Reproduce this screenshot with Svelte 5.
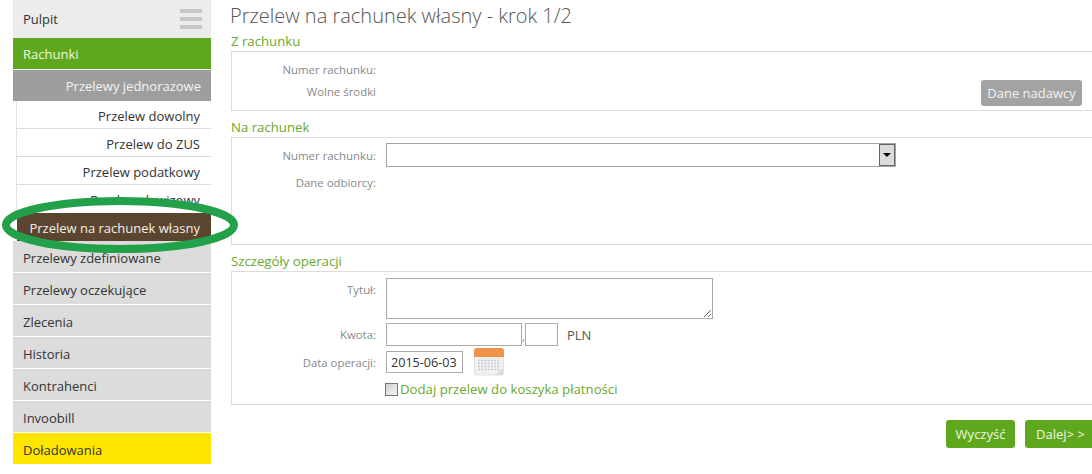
<script>
  const submenu = ['Przelew dowolny', 'Przelew do ZUS', 'Przelew podatkowy', 'Przelew dewizowy'];
  const after = ['Przelewy zdefiniowane', 'Przelewy oczekujące', 'Zlecenia', 'Historia', 'Kontrahenci', 'Invoobill'];
</script>

<div class="page">
  <nav class="side">
    <div class="pulpit">
      <span>Pulpit</span>
      <span class="burger"><i></i><i></i><i></i></span>
    </div>
    <div class="item active">Rachunki</div>
    <div class="item group">Przelewy jednorazowe</div>
    <ul class="sub">
      {#each submenu as s}
        <li>{s}</li>
      {/each}
    </ul>
    <div class="current">Przelew na rachunek własny</div>
    {#each after as a}
      <div class="item">{a}</div>
    {/each}
    <div class="item yellow">Doładowania</div>

    <!-- green marker round the current entry -->
    <svg class="marker" width="240" height="60" viewBox="0 0 240 60">
      <ellipse cx="120" cy="28" rx="114" ry="24" fill="none" stroke="#22a04a" stroke-width="8" />
    </svg>
  </nav>

  <main class="main">
    <h1>Przelew na rachunek własny - krok 1/2</h1>

    <h2>Z rachunku</h2>
    <section class="box from">
      <div class="fields">
        <div class="row r-from"><span class="lbl">Numer rachunku:</span></div>
        <div class="row r-from"><span class="lbl">Wolne środki</span></div>
      </div>
      <button class="btn gray">Dane nadawcy</button>
    </section>

    <h2>Na rachunek</h2>
    <section class="box to">
      <div class="row r-select">
        <span class="lbl">Numer rachunku:</span>
        <div class="select"><span class="arrow"></span></div>
      </div>
      <div class="row r-recv"><span class="lbl">Dane odbiorcy:</span></div>
    </section>

    <h2>Szczegóły operacji</h2>
    <section class="box details">
      <div class="row r-title">
        <span class="lbl">Tytuł:</span>
        <textarea></textarea>
      </div>
      <div class="row r-amount">
        <span class="lbl">Kwota:</span>
        <input class="whole" />
        <span class="comma">,</span>
        <input class="cents" />
        <span class="pln">PLN</span>
      </div>
      <div class="row r-date">
        <span class="lbl">Data operacji:</span>
        <input class="date" value="2015-06-03" />
        <svg class="cal" width="30" height="28" viewBox="0 0 30 28">
          <rect x="0.5" y="1" width="29" height="26" rx="2" fill="#f1f1f1" stroke="#e2e2e2" />
          <path d="M0 9V3a3 3 0 0 1 3-3h24a3 3 0 0 1 3 3v6z" fill="#f0924a" />
          <path d="M4 12.5h22M4 15.5h22M4 18.5h22M4 21.5h22" stroke="#c9ccd2" stroke-width="1.4" stroke-dasharray="2 1.2" />
          <path d="M21 27l8-7v5a2 2 0 0 1-2 2z" fill="#dcdcdc" />
        </svg>
      </div>
      <div class="row r-check">
        <span class="lbl"></span>
        <label class="check"><span class="cb"></span>Dodaj przelew do koszyka płatności</label>
      </div>
    </section>

    <div class="actions">
      <button class="btn green">Wyczyść</button>
      <button class="btn green">Dalej&gt; &gt;</button>
    </div>
  </main>
</div>

<style>
  :global(body) {
    background: #fff;
    font-family: "Open Sans", "Liberation Sans", sans-serif;
  }

  .page {
    display: flex;
    width: 1092px;
    height: 474px;
    overflow: hidden;
    font-size: 13px;
    color: #333;
  }

  /* Sidebar */
  .side {
    position: relative;
    flex: none;
    width: 198px;
    margin-left: 13px;
    margin-right: 20px;
  }

  .pulpit {
    display: flex;
    align-items: center;
    justify-content: space-between;
    height: 38px;
    padding: 0 9px 0 10px;
    background: #ececec;
    box-sizing: border-box;
  }

  .burger {
    display: flex;
    flex-direction: column;
    gap: 4px;
  }
  .burger i {
    display: block;
    width: 22px;
    height: 4px;
    background: #c6c6c6;
  }

  .item {
    height: 31px;
    line-height: 34px;
    padding-left: 10px;
    margin-bottom: 1px;
    background: #dcdcdc;
  }
  .active { background: #5fa81e; color: #eef6e0; line-height: 32px; }
  .group {
    background: #9e9e9e;
    color: #f4f4f4;
    line-height: 32px;
    text-align: right;
    padding: 0 10px 0 0;
    margin-bottom: 0;
  }
  .yellow { background: #ffe600; }

  .sub {
    list-style: none;
    margin: 0 0 0 3px;
    padding: 0;
    border-left: 1px solid #e2e2e2;
  }
  .sub li {
    height: 27px;
    line-height: 30px;
    text-align: right;
    padding-right: 11px;
    border-bottom: 1px solid #dcdcdc;
  }
  .sub li:last-child { height: 28px; border-bottom: none; }

  .current {
    height: 28px;
    line-height: 30px;
    margin-left: 4px;
    padding-right: 11px;
    text-align: right;
    background: #5b452f;
    color: #f3efe9;
  }

  .marker {
    position: absolute;
    left: -13px;
    top: 197px;
  }

  /* Main column */
  .main {
    flex: 1;
    min-width: 0;
    margin-right: -4px;
  }

  h1 {
    margin: 0 0 0 -1px;
    height: 31px;
    line-height: 31px;
    font-size: 20px;
    font-weight: 300;
    color: #555;
  }

  h2 {
    margin: 0;
    height: 20px;
    line-height: 20px;
    font-size: 13.2px;
    font-weight: 400;
    color: #6aa82e;
  }

  .box {
    box-sizing: border-box;
    border: 1px solid #dcdcdc;
    margin-bottom: 6px;
  }
  .from {
    display: flex;
    align-items: flex-end;
    justify-content: space-between;
    height: 60px;
    padding: 6px 13px 4px 0;
  }
  .fields {
    align-self: flex-start;
  }
  .to { height: 108px; padding-top: 5px; }
  .details { height: 134px; padding-top: 6px; }

  .row {
    display: grid;
    grid-template-columns: 144px auto;
    justify-content: start;
    align-items: center;
    column-gap: 10px;
  }
  .lbl {
    text-align: right;
    font-size: 11.4px;
    color: #888;
  }

  .r-from { height: 22px; }
  .r-select { height: 24px; margin-bottom: 3px; }
  .r-recv { height: 24px; }

  .select {
    position: relative;
    box-sizing: border-box;
    width: 510px;
    height: 24px;
    border: 1px solid #a5a5a5;
  }
  .arrow {
    position: absolute;
    right: 0;
    top: 0;
    bottom: 0;
    width: 16px;
    background: #dcdcdc;
    border: 1px solid #666;
    box-sizing: border-box;
  }
  .arrow::after {
    content: '';
    position: absolute;
    left: 3px;
    top: 8px;
    border: 4px solid transparent;
    border-top: 4px solid #000;
    border-bottom: none;
  }

  textarea, input {
    box-sizing: border-box;
    margin: 0;
    padding: 0 4px;
    border: 1px solid #a9a9a9;
    border-radius: 0;
    outline: none;
    background: #fff;
    font: inherit;
    color: #333;
  }
  textarea {
    display: block;
    width: 327px;
    height: 41px;
  }
  .r-title { align-items: start; }
  .r-title .lbl { padding-top: 4px; }

  .r-amount {
    display: flex;
    column-gap: 0;
    height: 23px;
    margin-top: 4px;
  }
  .r-amount .lbl, .r-date .lbl { width: 144px; margin-right: 10px; }
  .whole { width: 136px; height: 23px; }
  .comma { width: 3px; font-size: 11px; color: #888; line-height: 1; padding-top: 4px; }
  .cents { width: 33px; height: 23px; }
  .pln { margin-left: 9px; color: #555; }

  .r-date {
    display: flex;
    column-gap: 0;
    height: 28px;
    margin-top: 2px;
  }
  .date { width: 77px; height: 22px; font-size: 12.6px; }
  .cal { margin-left: 11px; }

  .r-check { height: 22px; margin-top: 2px; }
  .check {
    display: flex;
    align-items: center;
    margin-left: -1px;
    font-size: 13.2px;
    color: #6aa82e;
  }
  .cb {
    box-sizing: border-box;
    width: 13px;
    height: 13px;
    margin-right: 2px;
    border: 1px solid #777;
    background: linear-gradient(135deg, #d0d0d0, #f4f4f4);
  }

  /* Buttons */
  .btn {
    border: none;
    border-radius: 3px;
    font: inherit;
    padding: 0;
  }
  .gray {
    flex: none;
    width: 101px;
    height: 26px;
    background: #a3a3a3;
    color: #f2f2f2;
  }
  .green {
    height: 28px;
    background: #5fa81e;
    color: #eef6e0;
  }

  .actions {
    display: flex;
    justify-content: flex-end;
    gap: 10px;
    margin-top: 15px;
  }
  .actions .green:first-child { width: 69px; }
  .actions .green:last-child { width: 71px; }
</style>
